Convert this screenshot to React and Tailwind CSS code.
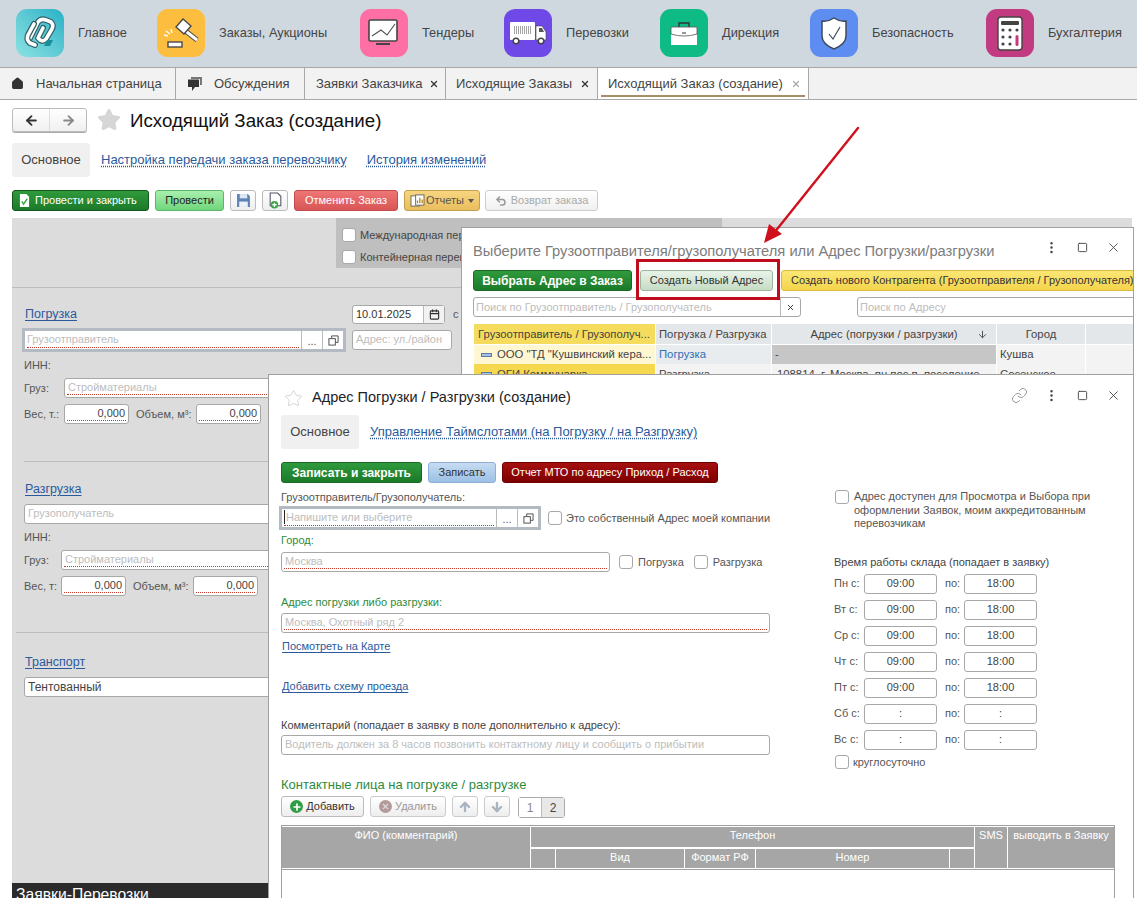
import React from "react";
import { Home, X, Calendar, ArrowLeft, ArrowRight, ArrowUp, ArrowDown, Link as ChainIcon, MoreVertical, Square, Plus, Undo2, Star } from "lucide-react";

const Logo = () => (
  <svg viewBox="0 0 48 48" className="h-12 w-12" fill="none">
    <g strokeLinecap="round" strokeLinejoin="round">
      <path d="M13 31 L22 13 Q25 9 30 11 L35 13 Q38 16 36 20 L30 30 Q27 33 24 31 L22 29 L27 19" stroke="#2f5f66" strokeWidth="6" />
      <path d="M13 31 L22 13 Q25 9 30 11 L35 13 Q38 16 36 20 L30 30 Q27 33 24 31 L22 29 L27 19" stroke="#fff" strokeWidth="3.6" />
      <path d="M19 36 L14 34 Q10 31 12 26 L18 15" stroke="#2f5f66" strokeWidth="6" />
      <path d="M19 36 L14 34 Q10 31 12 26 L18 15" stroke="#fff" strokeWidth="3.6" />
    </g>
    <path d="M28 37 L31 31 L37 31 L34 37 Z" fill="#1a8f9c" />
  </svg>
);

const Gavel = () => (
  <svg viewBox="0 0 48 48" className="h-12 w-12">
    <path d="M26 20 L40 31" stroke="#4a4a4a" strokeWidth="5" />
    <path d="M26 20 L40 31" stroke="#fff" strokeWidth="3" />
    <path d="M26 10 L19 18 L27 25 L34 17 Z" fill="#fff" stroke="#4a4a4a" strokeWidth="1.4" />
    <rect x="11" y="33" width="14" height="5" fill="#fff" stroke="#4a4a4a" strokeWidth="1.4" />
    <path d="M7 26 L11 27 M9 22 L13 25 M14 20 L15 24" stroke="#fff" strokeWidth="1.4" />
  </svg>
);

const Monitor = () => (
  <svg viewBox="0 0 48 48" className="h-12 w-12" fill="none">
    <rect x="9" y="11" width="28" height="21" rx="1.5" fill="#fff" stroke="#444" strokeWidth="1.6" />
    <path d="M12 27 L21 21 L27 26 L35 15" stroke="#555" strokeWidth="1.2" />
    <path d="M16 35 H30" stroke="#444" strokeWidth="2" />
  </svg>
);

const Truck = () => (
  <svg viewBox="0 0 48 48" className="h-12 w-12">
    <rect x="6" y="13" width="25" height="18" rx="1" fill="#fff" />
    <path d="M32 17 H38 L42 23 V31 H32 Z" fill="#fff" stroke="#444" strokeWidth="0.6" />
    <path d="M35 19 H38 L40 23 H35 Z" fill="#555" />
    <path d="M10 18 H27 M10 20 H27 M10 22 H27 M10 24 H27" stroke="#888" strokeWidth="1.6" strokeDasharray="1 1" />
    <circle cx="12" cy="32" r="2.8" fill="#fff" stroke="#444" strokeWidth="1.5" />
    <circle cx="37" cy="32" r="2.8" fill="#fff" stroke="#444" strokeWidth="1.5" />
  </svg>
);

const Briefcase = () => (
  <svg viewBox="0 0 48 48" className="h-12 w-12" fill="none">
    <path d="M19 18 V14 H29 V18" stroke="#333" strokeWidth="1.4" />
    <rect x="11" y="18" width="26" height="18" fill="#fff" />
    <path d="M11 18 H37 V25 Q24 29 11 25 Z" fill="#fff" stroke="#555" strokeWidth="0.8" />
    <path d="M22 24 H26" stroke="#333" strokeWidth="1.2" />
  </svg>
);

const Shield = () => (
  <svg viewBox="0 0 48 48" className="h-12 w-12" fill="none">
    <path d="M24 9 Q30 13 36 12 V27 Q36 35 24 40 Q12 35 12 27 V12 Q18 13 24 9 Z" fill="#fff" stroke="#3d4a5c" strokeWidth="1.5" />
    <path d="M19 25 L23 30 L30 18" stroke="#3d4a5c" strokeWidth="1.2" />
  </svg>
);

const Calc = () => (
  <svg viewBox="0 0 48 48" className="h-12 w-12">
    <rect x="12" y="8" width="24" height="33" rx="3" fill="#fff" stroke="#444" strokeWidth="1.4" />
    <rect x="15" y="12" width="18" height="4" rx="1" fill="#444" />
    <g fill="#444">
      <circle cx="17" cy="21" r="1.6" /><circle cx="24" cy="21" r="1.6" /><circle cx="31" cy="21" r="1.6" />
      <circle cx="17" cy="28" r="1.6" /><circle cx="24" cy="28" r="1.6" />
      <circle cx="17" cy="35" r="1.6" /><circle cx="24" cy="35" r="1.6" />
    </g>
    <rect x="29.5" y="26" width="3" height="11" rx="1.5" fill="#c23b80" />
  </svg>
);

const navItems = [
  { label: "Главное", w: "w-[48px]", icon: <Logo />, bg: "bg-linear-to-tr from-[#8ae2e2] to-[#20b2c6]" },
  { label: "Заказы, Аукционы", w: "w-[110px]", icon: <Gavel />, bg: "bg-[#fdbd3e]" },
  { label: "Тендеры", w: "w-[51px]", icon: <Monitor />, bg: "bg-[#fd6fa5]" },
  { label: "Перевозки", w: "w-[63px]", icon: <Truck />, bg: "bg-[#6f48e8]" },
  { label: "Дирекция", w: "w-[57px]", icon: <Briefcase />, bg: "bg-[#0fbb84]" },
  { label: "Безопасность", w: "w-[83px]", icon: <Shield />, bg: "bg-[#5d8df0]" },
  { label: "Бухгалтерия", w: "w-[76px]", icon: <Calc />, bg: "bg-[#c23b80]" },
];

const Link = ({ children, dotted, className = "" }) => (
  <span className={`text-[#2a5a9c] underline underline-offset-2 ${dotted ? "decoration-dotted" : ""} ${className}`}>{children}</span>
);

// поле ввода 1С: рамка, плейсхолдер, красная точечная линия у обязательных
const Field = ({ className = "", placeholder, value, required, right, center }) => (
  <div className={`flex h-[20px] items-stretch overflow-hidden rounded-[3px] border border-[#a8a8a8] bg-white ${className}`}>
    <div className={`mx-[2px] mt-px mb-[2px] flex min-w-0 flex-1 items-center whitespace-nowrap px-px ${right ? "justify-end" : ""} ${center ? "justify-center" : ""} ${required ? "border-b border-dotted border-[#c0392b]" : ""} ${value ? "text-[#444]" : "text-[#bdbdbd]"}`}>
      {value || placeholder}
    </div>
  </div>
);

const Check = ({ className = "" }) => (
  <span className={`inline-block h-[14px] w-[14px] shrink-0 rounded-[3px] border border-[#a8a8a8] bg-white ${className}`} />
);

const FocusField = ({ className = "", placeholder, caret }) => (
  <div className={`flex h-[24px] items-stretch border-[3px] border-[#b4bac2] bg-white ${className}`}>
    <div className="mx-[2px] mb-px flex min-w-0 flex-1 items-center border-b border-dotted border-[#c0392b] text-[#bdbdbd]">
      {caret && <span className="mr-px h-[14px] w-px bg-[#222]" />}
      {placeholder}
    </div>
    <div className="flex w-[21px] items-end justify-center border-l border-[#bbb] pb-[2px] leading-[12px] text-[#555]">...</div>
    <div className="flex w-[21px] items-center justify-center border-l border-[#bbb]">
      <svg viewBox="0 0 12 12" className="h-[11px] w-[11px]" fill="none" stroke="#444" strokeWidth="1">
        <path d="M4 3.5 V1 H11 V8 H8.5" /><rect x="1" y="4" width="7" height="7" fill="#fff" />
      </svg>
    </div>
  </div>
);

const Btn = ({ className = "", children }) => (
  <div className={`flex h-[21px] shrink-0 items-center justify-center whitespace-nowrap rounded-[3px] border ${className}`}>{children}</div>
);

const WinControls = ({ link }) => (
  <div className="flex items-center text-[#444]">
    {link && <ChainIcon className="mr-[16px] h-[17px] w-[17px] text-[#888]" strokeWidth={1.2} />}
    <MoreVertical className="h-[15px] w-[15px]" strokeWidth={2} />
    <Square className="ml-[18px] h-[11px] w-[11px]" strokeWidth={2} />
    <X className="ml-[18px] h-[15px] w-[15px]" strokeWidth={1.4} />
  </div>
);

const CargoBlock = ({ grLeft, vesLabel }) => (
  <>
    <div className="ml-[12px] mt-[6px] h-[15px] leading-[15px] text-[#555]">ИНН:</div>
    <div className="ml-[12px] mt-[5px] flex items-center">
      <span className="text-[#555]" style={{ width: grLeft }}>Груз:</span>
      <Field className="w-[300px]" placeholder="Стройматериалы" required />
    </div>
    <div className="ml-[12px] mt-[6px] flex items-center">
      <span className="whitespace-nowrap text-[#555]" style={{ width: grLeft }}>{vesLabel}</span>
      <Field className="w-[65px]" value="0,000" required right />
      <span className="ml-[7px] w-[60px] whitespace-nowrap text-[#555]">Объем, м³:</span>
      <Field className="w-[65px]" value="0,000" required right />
    </div>
  </>
);

const days = [
  ["Пн с:", "09:00", "18:00"],
  ["Вт с:", "09:00", "18:00"],
  ["Ср с:", "09:00", "18:00"],
  ["Чт с:", "09:00", "18:00"],
  ["Пт с:", "09:00", "18:00"],
  ["Сб с:", ":", ":"],
  ["Вс с:", ":", ":"],
];

const thCell = "flex items-start justify-center bg-[#a6a6a6] whitespace-nowrap text-white";

export default function App() {
  return (
    <div className="relative h-[898px] w-[1137px] overflow-hidden bg-white text-[11px] text-[#444]" style={{ fontFamily: '"Liberation Sans", Arial, sans-serif' }}>
      {/* верхнее меню */}
      <div className="flex h-[67px] gap-[31px] bg-[#d0d8df] pl-[16px] pt-[9px]">
        {navItems.map((item) => (
          <div key={item.label} className="flex h-[48px] shrink-0 items-center gap-[14px]">
            <div className={`h-12 w-12 overflow-hidden rounded-[11px] ${item.bg}`}>{item.icon}</div>
            <span className={`whitespace-nowrap text-[12.8px] text-[#444] ${item.w}`}>{item.label}</span>
          </div>
        ))}
      </div>

      {/* вкладки */}
      <div className="flex h-[33px] border-y border-[#a8a8a8] bg-[#f2f2f2] text-[13px] text-[#444]">
        <div className="flex w-[176px] items-center border-r border-[#a8a8a8] pl-[11px]">
          <Home className="mr-[12px] h-[13px] w-[13px] fill-[#333] text-[#333]" />
          Начальная страница
        </div>
        <div className="flex w-[129px] items-center border-r border-[#a8a8a8] pl-[11px]">
          <svg viewBox="0 0 16 16" className="mr-[11px] h-[16px] w-[16px]">
            <path d="M4 1 H15 V9 H13 V3 H4 Z" fill="#777" />
            <path d="M1 3.5 H12 V11 H8 L5 15 V11 H1 Z" fill="#333" />
          </svg>
          Обсуждения
        </div>
        <div className="flex w-[141px] items-center border-r border-[#a8a8a8] pl-[11px]">
          Заявки Заказчика
          <X className="ml-[6px] h-[10px] w-[10px] text-[#333]" strokeWidth={3} />
        </div>
        <div className="flex w-[152px] items-center border-r border-[#a8a8a8] pl-[10px]">
          Исходящие Заказы
          <X className="ml-[8px] h-[10px] w-[10px] text-[#333]" strokeWidth={3} />
        </div>
        <div className="relative flex w-[211px] items-center border-r border-[#a8a8a8] bg-white pl-[10px]">
          Исходящий Заказ (создание)
          <X className="ml-[8px] h-[10px] w-[10px] text-[#aaa]" strokeWidth={3} />
          <span className="absolute inset-x-[3px] bottom-[2px] h-[2px] bg-[#a39165]" />
        </div>
      </div>

      {/* заголовок формы */}
      <div className="ml-[12px] mt-[8px] flex h-[24px] items-center">
        <div className="flex h-[24px] w-[75px] rounded-[3px] border border-[#bbb] bg-linear-to-b from-white to-[#f0f0f0] shadow-[0_1px_0_#aaa]">
          <div className="flex flex-1 items-center justify-center border-r border-[#ddd]"><ArrowLeft className="h-[15px] w-[15px] text-[#333]" strokeWidth={3} /></div>
          <div className="flex flex-1 items-center justify-center"><ArrowRight className="h-[15px] w-[15px] text-[#888]" strokeWidth={3} /></div>
        </div>
        <Star className="ml-[10px] h-[24px] w-[24px] fill-[#d6d6d6] text-[#d6d6d6]" />
        <h1 className="ml-[9px] pt-px text-[18.7px] font-normal leading-[24px] text-[#111]">Исходящий Заказ (создание)</h1>
      </div>

      <div className="ml-[12px] mt-[11px] flex items-center text-[13px]">
        <div className="flex h-[34px] w-[78px] items-center justify-center rounded-[3px] bg-[#f0f0f0] text-[#444]">Основное</div>
        <Link dotted className="ml-[11px]">Настройка передачи заказа перевозчику</Link>
        <Link dotted className="ml-[20px]">История изменений</Link>
      </div>

      {/* кнопки формы */}
      <div className="ml-[12px] mt-[13px] flex gap-[6px]">
        <Btn className="w-[137px] justify-start border-[#14561c] bg-linear-to-b from-[#2f9a3c] to-[#1b7a2a] pl-[6px] text-white">
          <svg viewBox="0 0 12 14" className="mr-[5px] h-[13px] w-[11px]"><path d="M1 0 H8 L11 3 V14 H1 Z" fill="#fff" /><path d="M3 8 L5 11 L9 5" stroke="#3aa845" strokeWidth="1.6" fill="none" /></svg>
          Провести и закрыть
        </Btn>
        <Btn className="w-[69px] border-[#5db56a] bg-linear-to-b from-[#a8f0ae] to-[#6fd67c] text-[#222]">Провести</Btn>
        <Btn className="w-[26px] border-[#bbb] bg-linear-to-b from-white to-[#eee]">
          <svg viewBox="0 0 14 14" className="h-[15px] w-[15px]"><path d="M1 1 H11 L13 3 V13 H1 Z" fill="#5d82b5" /><rect x="3.5" y="1" width="7" height="4" fill="#dfe7f2" /><rect x="3" y="8" width="8" height="5" fill="#eef2f8" /></svg>
        </Btn>
        <Btn className="w-[26px] border-[#bbb] bg-linear-to-b from-white to-[#eee]">
          <svg viewBox="0 0 14 16" className="h-[17px] w-[15px]"><path d="M2 1 H9 L12 4 V13 H2 Z" fill="#fff" stroke="#556" strokeWidth="1" /><circle cx="6" cy="12" r="3.6" fill="#38a546" /><path d="M6 10 V14 M4 12 H8" stroke="#fff" strokeWidth="1.2" /></svg>
        </Btn>
        <Btn className="w-[104px] border-[#c24a4a] bg-linear-to-b from-[#ee7676] to-[#d95555] text-white">Отменить Заказ</Btn>
        <Btn className="w-[76px] border-[#c2a04e] bg-linear-to-b from-[#f7d680] to-[#e9bd5c] text-[#555]">
          <svg viewBox="0 0 16 14" className="mr-px h-[13px] w-[15px]"><rect x="1" y="2" width="9" height="11" fill="#fff" stroke="#666" /><rect x="6" y="1" width="9" height="11" fill="#fff" stroke="#666" /><path d="M8 10 V7 M10.5 10 V4 M13 10 V6" stroke="#b8860b" strokeWidth="1.4" /></svg>
          Отчеты
          <span className="ml-[4px] h-0 w-0 border-x-[3px] border-t-[4px] border-x-transparent border-t-[#555]" />
        </Btn>
        <Btn className="ml-[-1px] w-[113px] border-[#ccc] bg-linear-to-b from-white to-[#f0f0f0] text-[#aaa]">
          <Undo2 className="mr-[4px] h-[12px] w-[12px] text-[#999]" strokeWidth={3} />
          Возврат заказа
        </Btn>
      </div>

      {/* серая подложка формы заказа */}
      <div className="ml-[12px] mt-[7px] flex h-[680px] w-[1120px] flex-col bg-[#dcdcdc]">
        <div className="h-[70px] shrink-0 border-b border-[#bcbcbc]">
          <div className="ml-[324px] flex h-[50px] w-[386px] flex-col justify-center gap-[6px] bg-[#bfbfbf] pl-[6px] pt-[6px]">
            <div className="flex items-center gap-[4px] text-[#444]"><Check /><span className="w-[102px] overflow-hidden whitespace-nowrap">Международная перевозка</span></div>
            <div className="flex items-center gap-[4px] text-[#444]"><Check /><span className="w-[102px] overflow-hidden whitespace-nowrap">Контейнерная перевозка</span></div>
          </div>
        </div>

        <div className="ml-[13px] mt-[17px] flex h-[19px] items-center">
          <Link className="w-[327px] text-[12.5px]">Погрузка</Link>
          <div className="flex h-[19px] w-[93px] rounded-[3px] border border-[#a8a8a8] bg-white">
            <span className="flex flex-1 items-center pl-[3px] text-[#333]">10.01.2025</span>
            <span className="flex w-[21px] items-center justify-center border-l border-[#bbb] bg-[#f2f2f2]"><Calendar className="h-[11px] w-[11px] text-[#333]" strokeWidth={2.5} /></span>
          </div>
          <span className="ml-[8px] text-[#555]">с</span>
        </div>
        <div className="ml-[10px] mt-[4px] flex items-center">
          <FocusField className="w-[324px]" placeholder="Грузоотправитель" />
          <Field className="ml-[6px] w-[100px]" placeholder="Адрес: ул./район" />
        </div>
        <CargoBlock grLeft={40} vesLabel="Вес, т.:" />

        <div className="ml-[12px] mt-[37px] border-t border-[#bcbcbc]" />
        <div className="ml-[13px] mt-[19px] text-[12.5px] leading-[16px]"><Link>Разгрузка</Link></div>
        <Field className="ml-[12px] mt-[7px] w-[260px]" placeholder="Грузополучатель" />
        <CargoBlock grLeft={37} vesLabel="Вес, т:" />

        <div className="ml-[4px] mt-[36px] border-t border-[#bcbcbc]" />
        <div className="ml-[13px] mt-[21px] text-[12.5px] leading-[16px]"><Link>Транспорт</Link></div>
        <Field className="ml-[12px] mt-[7px] w-[260px] text-[12px]" value="Тентованный" />

        <div className="mt-auto flex h-[15px] w-[256px] items-start overflow-hidden bg-[#2b2b2b] pl-[4px] text-[15.7px] leading-[24px] text-white">Заявки-Перевозки</div>
      </div>

      {/* окно выбора адреса */}
      <div className="absolute left-[461px] top-[227px] h-[200px] w-[673px] overflow-hidden border border-[#a0a0a0] bg-white">
        <div className="flex h-[42px] items-end justify-between pl-[11px] pr-[12px]">
          <span className="pb-[8px] text-[14.7px] text-[#7c7c7c]">Выберите Грузоотправителя/грузополучателя или Адрес Погрузки/разгрузки</span>
          <div className="pb-[15px]"><WinControls /></div>
        </div>
        <div className="ml-[11px] flex items-center">
          <Btn className="w-[159px] border-[#1a6a24] bg-linear-to-b from-[#2f9a3c] to-[#1b7a2a] text-[12px] font-bold text-white">Выбрать Адрес в Заказ</Btn>
          <Btn className="ml-[8px] w-[133px] border-[#9db59f] bg-linear-to-b from-[#e8f3e8] to-[#c6dcc6] text-[#333]">Создать Новый Адрес</Btn>
          <Btn className="ml-[8px] w-[400px] justify-start border-[#d9bc3c] bg-linear-to-b from-[#fbe774] to-[#f4d44c] pl-[9px] text-[#333]">Создать нового Контрагента (Грузоотправителя / Грузополучателя)</Btn>
        </div>
        <div className="ml-[11px] mt-[6px] flex">
          <div className="flex h-[20px] w-[328px] shrink-0 rounded-[3px] border border-[#a8a8a8]">
            <span className="flex flex-1 items-center pl-[2px] text-[#bdbdbd]">Поиск по Грузоотправитель / Грузополучатель</span>
            <span className="flex w-[20px] items-center justify-center border-l border-[#bbb]"><X className="h-[9px] w-[9px] text-[#333]" strokeWidth={2.5} /></span>
          </div>
          <div className="ml-[56px] flex h-[20px] w-[300px] shrink-0 items-center rounded-[3px] border border-[#a8a8a8] pl-[2px] text-[#bdbdbd]">Поиск по Адресу</div>
        </div>
        <div className="ml-[12px] mt-[7px] grid grid-cols-[181px_115px_224px_88px_60px] gap-x-px whitespace-nowrap text-[11.3px] text-[#444]">
          <div className="flex h-[20px] items-center bg-[#f6dc5c] pl-[4px]">Грузоотправитель / Грузополуч...</div>
          <div className="flex h-[20px] items-center bg-[#e4e7ea] pl-[3px]">Погрузка / Разгрузка</div>
          <div className="relative flex h-[20px] items-center justify-center bg-[#e4e7ea]">Адрес (погрузки / разгрузки)<ArrowDown className="absolute right-[8px] h-[11px] w-[11px]" /></div>
          <div className="flex h-[20px] items-center justify-center bg-[#e4e7ea]">Город</div>
          <div className="h-[20px] bg-[#e4e7ea]" />
          <div className="mt-px flex h-[19px] items-center bg-[#fff6d2] pl-[7px]"><span className="mr-[5px] h-[4px] w-[11px] shrink-0 border border-[#5b7da8] bg-[#a5c0e0]" />ООО "ТД "Кушвинский кера...</div>
          <div className="mt-px flex h-[19px] items-center bg-[#e9ecef] pl-[3px] text-[#2f6fb5]">Погрузка</div>
          <div className="mt-px flex h-[19px] items-center bg-[#c6c6c6] pl-[3px]">-</div>
          <div className="mt-px flex h-[19px] items-center bg-[#f3f3f3] pl-[3px]">Кушва</div>
          <div className="mt-px h-[19px] bg-[#f3f3f3]" />
          <div className="flex h-[20px] items-center bg-[#f6d84e] pl-[7px]"><span className="mr-[5px] h-[4px] w-[11px] shrink-0 border border-[#5b7da8] bg-[#a5c0e0]" />ОГИ Коммунарка</div>
          <div className="flex h-[20px] items-center bg-[#f3f3f3] pl-[3px]">Разгрузка</div>
          <div className="flex h-[20px] items-center overflow-hidden bg-[#f3f3f3] pl-[5px]">108814, г. Москва, пн пос.п. поселение</div>
          <div className="flex h-[20px] items-center bg-[#f3f3f3] pl-[3px]">Сосенское</div>
          <div className="h-[20px] bg-[#f3f3f3]" />
        </div>
      </div>

      {/* окно адреса */}
      <div className="absolute left-[268px] top-[374px] h-[530px] w-[866px] border border-[#a0a0a0] bg-white pl-[12px]">
        <div className="flex h-[40px] items-center justify-between pr-[12px] pt-[6px]">
          <div className="flex items-center">
            <Star className="ml-[3px] h-[19px] w-[19px] text-[#c9c9c9]" strokeWidth={1} />
            <span className="ml-[9px] text-[14.5px] text-[#222]">Адрес Погрузки / Разгрузки (создание)</span>
          </div>
          <div className="-mt-[6px]"><WinControls link /></div>
        </div>
        <div className="flex items-center text-[13px]">
          <div className="flex h-[34px] w-[78px] items-center justify-center rounded-[3px] bg-[#f0f0f0]">Основное</div>
          <Link dotted className="ml-[11px]">Управление Таймслотами (на Погрузку / на Разгрузку)</Link>
        </div>
        <div className="mt-[13px] flex gap-[6px]">
          <Btn className="w-[141px] border-[#1a6a24] bg-linear-to-b from-[#2f9a3c] to-[#1b7a2a] text-[12px] font-bold text-white">Записать и закрыть</Btn>
          <Btn className="w-[68px] border-[#8fb0d4] bg-linear-to-b from-[#c6dcf2] to-[#9cc0e6] text-[#333]">Записать</Btn>
          <Btn className="w-[216px] border-[#6e0000] bg-linear-to-b from-[#a51010] to-[#7e0000] text-white">Отчет МТО по адресу Приход / Расход</Btn>
        </div>

        <div className="flex">
          <div className="w-[553px]">
            <div className="mt-[7px] h-[14px] leading-[14px] text-[#555]">Грузоотправитель/Грузополучатель:</div>
            <div className="ml-[-2px] mt-[2px] flex items-center">
              <FocusField className="w-[262px]" placeholder="Напишите или выберите" caret />
              <Check className="ml-[7px]" />
              <span className="ml-[4px] whitespace-nowrap text-[#555]">Это собственный Адрес моей компании</span>
            </div>
            <div className="mt-[3px] h-[14px] leading-[14px] text-[#2e8b3d]">Город:</div>
            <div className="mt-[5px] flex items-center">
              <Field className="w-[329px]" placeholder="Москва" required />
              <Check className="ml-[9px]" />
              <span className="ml-[5px] text-[#555]">Погрузка</span>
              <Check className="ml-[10px]" />
              <span className="ml-[5px] text-[#555]">Разгрузка</span>
            </div>
            <div className="mt-[23px] h-[14px] leading-[14px] text-[#2e8b3d]">Адрес погрузки либо разгрузки:</div>
            <Field className="mt-[4px] w-[489px]" placeholder="Москва, Охотный ряд 2" required />
            <div className="ml-px mt-[6px] h-[14px] leading-[14px]"><Link>Посмотреть на Карте</Link></div>
            <div className="ml-px mt-[26px] h-[14px] leading-[14px]"><Link>Добавить схему проезда</Link></div>
            <div className="mt-[25px] h-[14px] leading-[14px] text-[#444]">Комментарий (попадает в заявку в поле дополнительно к адресу):</div>
            <Field className="mt-[3px] w-[489px]" placeholder="Водитель должен за 8 часов позвонить контактному лицу и сообщить о прибытии" />
          </div>

          <div className="mt-[7px] w-[280px] text-[#555]">
            <div className="flex gap-[5px]">
              <Check className="ml-px" />
              <div className="w-[240px] leading-[13.5px]">Адрес доступен для Просмотра и Выбора при оформлении Заявок, моим аккредитованным перевозчикам</div>
            </div>
            <div className="mt-[24px] leading-[14px] text-[#444]">Время работы склада (попадает в заявку)</div>
            <div className="mt-[5px] flex flex-col gap-[6px]">
              {days.map(([day, from, to]) => (
                <div key={day} className="flex items-center">
                  <span className="w-[30px]">{day}</span>
                  <Field className="w-[73px]" value={from} center />
                  <span className="ml-[8px] w-[19px]">по:</span>
                  <Field className="w-[73px]" value={to} center />
                </div>
              ))}
            </div>
            <div className="mt-[4px] flex items-center gap-[4px]">
              <Check className="ml-px" />круглосуточно
            </div>
          </div>
        </div>

        <div className="mt-[7px] text-[13px] leading-[16px] text-[#2e8b3d]">Контактные лица на погрузке / разгрузке</div>
        <div className="mt-[3px] flex items-start gap-[6px]">
          <Btn className="w-[83px] border-[#bbb] bg-linear-to-b from-white to-[#eee] text-[#333]">
            <span className="mr-[3px] flex h-[13px] w-[13px] items-center justify-center rounded-full bg-[#2f9e44]"><Plus className="h-[10px] w-[10px] text-white" strokeWidth={4} /></span>
            Добавить
          </Btn>
          <Btn className="w-[76px] border-[#ccc] bg-linear-to-b from-white to-[#eee] text-[#999]">
            <span className="mr-[3px] flex h-[13px] w-[13px] items-center justify-center rounded-full bg-[#b49a9a]"><X className="h-[9px] w-[9px] text-[#ddd]" strokeWidth={3} /></span>
            Удалить
          </Btn>
          <Btn className="w-[26px] border-[#ccc] bg-linear-to-b from-white to-[#eee]"><ArrowUp className="h-[14px] w-[14px] text-[#a8b4c0]" strokeWidth={4} /></Btn>
          <Btn className="w-[26px] border-[#ccc] bg-linear-to-b from-white to-[#eee]"><ArrowDown className="h-[14px] w-[14px] text-[#a8b4c0]" strokeWidth={4} /></Btn>
          <div className="ml-[2px] mt-[1px] flex h-[21px] w-[47px] rounded-[3px] border border-[#aaa] text-[12px]">
            <span className="flex flex-1 items-center justify-center bg-white text-[#888]">1</span>
            <span className="flex flex-1 items-center justify-center border-l border-[#bbb] bg-[#e8e8e8]">2</span>
          </div>
        </div>

        <div className="mt-[7px] h-[80px] w-[834px] border border-[#a0a0a0]">
          <div className="grid grid-cols-[248px_24px_128px_70px_193px_24px_32px_106px] grid-rows-[20px_19px] gap-x-px gap-y-[2px] border-b border-[#a0a0a0] pt-px pb-px">
            <div className={`${thCell} row-span-2`}>ФИО (комментарий)</div>
            <div className={`${thCell} col-span-5`}>Телефон</div>
            <div className={`${thCell} row-span-2`}>SMS</div>
            <div className={`${thCell} row-span-2`}>выводить в Заявку</div>
            <div className={thCell} />
            <div className={thCell}>Вид</div>
            <div className={thCell}>Формат РФ</div>
            <div className={thCell}>Номер</div>
            <div className={thCell} />
          </div>
        </div>
      </div>

      {/* выноска-подсказка: рамка и стрелка */}
      <div className="pointer-events-none absolute left-[636px] top-[259px] h-[41px] w-[144px] border-[3px] border-[#c00d1e]" />
      <svg className="pointer-events-none absolute left-[740px] top-[120px] h-[130px] w-[130px]" viewBox="0 0 130 130" fill="none">
        <path d="M118 8 L34 113" stroke="#d0101c" strokeWidth="2.4" strokeLinecap="round" />
        <path d="M24 123 L29 104 L42 114 Z" fill="#d0101c" />
      </svg>
    </div>
  );
}
